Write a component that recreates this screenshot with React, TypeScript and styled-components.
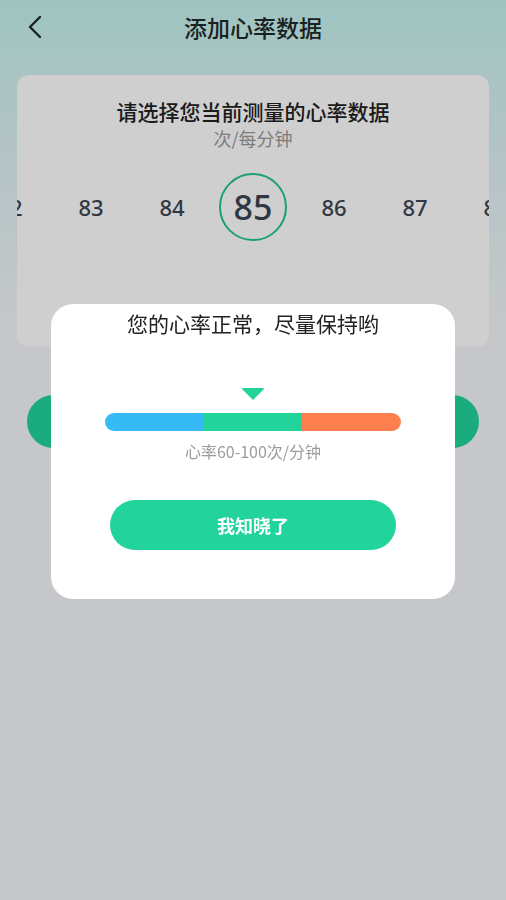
import styled, { createGlobalStyle } from 'styled-components';

const GlobalStyle = createGlobalStyle`
    body {
        margin: 0;
        font-family: 'Noto Sans CJK SC', 'Noto Sans', sans-serif;
    }
`;

const values = [82, 83, 84, 85, 86, 87, 88];
const selected = 85;

export default function App() {
    return (
        <>
            <GlobalStyle />
            <Page>
                <Header>
                    <BackButton aria-label="back">
                        <svg width="16" height="24" viewBox="0 0 16 24" fill="none">
                            <polyline
                                points="13,2 3,12 13,22"
                                stroke="#1f2a2a"
                                strokeWidth="2.4"
                                strokeLinecap="round"
                                strokeLinejoin="round"
                            />
                        </svg>
                    </BackButton>
                    <Title>添加心率数据</Title>
                </Header>

                <PickerCard>
                    <CardTitle>请选择您当前测量的心率数据</CardTitle>
                    <CardUnit>次/每分钟</CardUnit>
                    <NumberRow>
                        {values.map((v) => (
                            <NumberItem key={v}>
                                <NumberText $active={v === selected}>{v}</NumberText>
                            </NumberItem>
                        ))}
                    </NumberRow>
                </PickerCard>

                <SaveButton>保存</SaveButton>
            </Page>

            <Overlay>
                <Modal>
                    <ModalTitle>您的心率正常，尽量保持哟</ModalTitle>
                    <Indicator />
                    <RangeBar>
                        <RangeSegment $color="#36baf6" />
                        <RangeSegment $color="#22d49c" />
                        <RangeSegment $color="#fe7f4e" />
                    </RangeBar>
                    <RangeLabel>心率60-100次/分钟</RangeLabel>
                    <ConfirmButton>我知晓了</ConfirmButton>
                </Modal>
            </Overlay>
        </>
    );
}

const Page = styled.div`
    min-height: 900px;
    background: linear-gradient(180deg, #c3f3ee 0px, #dcf1f2 140px, #f4f6fa 330px);
    display: flex;
    flex-direction: column;
`;

const Header = styled.div`
    position: relative;
    height: 54px;
    display: flex;
    align-items: center;
    justify-content: center;
`;

const BackButton = styled.div`
    position: absolute;
    left: 27px;
    top: 15px;
    display: flex;
`;

const Title = styled.h1`
    margin: 0;
    font-size: 23px;
    font-weight: 500;
    color: #1f2a2a;
`;

const PickerCard = styled.div`
    margin: 21px 17px 0;
    height: 272px;
    background: #ffffff;
    border-radius: 12px;
    display: flex;
    flex-direction: column;
    align-items: center;
    overflow: hidden;
`;

const CardTitle = styled.div`
    margin-top: 22px;
    font-size: 21px;
    line-height: 28px;
    font-weight: 500;
    color: #222222;
`;

const CardUnit = styled.div`
    margin-top: 1px;
    font-size: 18px;
    line-height: 24px;
    color: #9a9a9a;
`;

const NumberRow = styled.div`
    margin-top: 23px;
    width: 100%;
    display: flex;
    justify-content: center;
`;

const NumberItem = styled.div`
    flex: 0 0 81px;
    display: flex;
    justify-content: center;
    align-items: center;
    height: 68px;
`;

const NumberText = styled.div<{ $active: boolean }>`
    display: flex;
    align-items: center;
    justify-content: center;
    box-sizing: border-box;
    width: ${(p) => (p.$active ? '68px' : 'auto')};
    height: ${(p) => (p.$active ? '68px' : 'auto')};
    border-radius: 50%;
    border: ${(p) => (p.$active ? '2.5px solid #22c58f' : 'none')};
    font-family: 'Noto Sans', sans-serif;
    font-size: ${(p) => (p.$active ? '34px' : '22px')};
    font-weight: 500;
    color: #3b4652;
`;

const SaveButton = styled.div`
    margin: 48px 27px 0;
    height: 53px;
    border-radius: 27px;
    background: #22d49c;
    color: #ffffff;
    font-size: 17px;
    font-weight: 700;
    display: flex;
    align-items: center;
    justify-content: center;
`;

const Overlay = styled.div`
    position: fixed;
    inset: 0;
    background: rgba(0, 0, 0, 0.19);
    display: flex;
    align-items: center;
    justify-content: center;
`;

const Modal = styled.div`
    width: 404px;
    height: 295px;
    margin-top: 2px;
    background: #ffffff;
    border-radius: 22px;
    display: flex;
    flex-direction: column;
    align-items: center;
    box-sizing: border-box;
    padding-top: 5px;
`;

const ModalTitle = styled.div`
    font-size: 21px;
    line-height: 28px;
    color: #222222;
`;

const Indicator = styled.div`
    margin-top: 51px;
    width: 0;
    height: 0;
    border-left: 12px solid transparent;
    border-right: 12px solid transparent;
    border-top: 12px solid #22d49c;
    border-radius: 3px;
`;

const RangeBar = styled.div`
    margin-top: 13px;
    width: 296px;
    height: 18px;
    border-radius: 9px;
    overflow: hidden;
    display: flex;
`;

const RangeSegment = styled.div<{ $color: string }>`
    flex: 1;
    background: ${(p) => p.$color};
`;

const RangeLabel = styled.div`
    margin-top: 9px;
    font-size: 16px;
    line-height: 22px;
    color: #9c9c9c;
`;

const ConfirmButton = styled.div`
    margin-top: 38px;
    width: 286px;
    height: 50px;
    border-radius: 25px;
    background: #22d49c;
    color: #ffffff;
    font-size: 18px;
    font-weight: 700;
    display: flex;
    align-items: center;
    justify-content: center;
`;
